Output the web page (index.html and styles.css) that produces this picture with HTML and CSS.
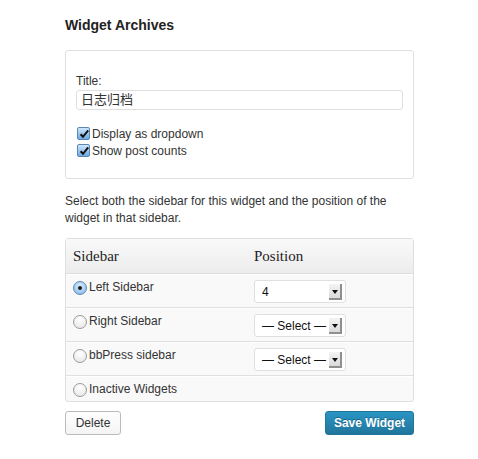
FILE: index.html
```html
<!DOCTYPE html>
<html>
<head>
<meta charset="utf-8">
<link rel="stylesheet" href="styles.css">
</head>
<body>
<div class="widget">
  <h3 class="widget-title">Widget Archives</h3>
  <div class="box">
    <div class="field-label">Title:</div>
    <div class="text-input">日志归档</div>
    <div class="checks">
      <div class="check-row"><span class="checkbox"><svg viewBox="0 0 12 12" width="12" height="12"><path d="M2.6 6.2 L5 8.8 L10.2 2.4" fill="none" stroke="#111" stroke-width="2"/></svg></span><span>Display as dropdown</span></div>
      <div class="check-row"><span class="checkbox"><svg viewBox="0 0 12 12" width="12" height="12"><path d="M2.6 6.2 L5 8.8 L10.2 2.4" fill="none" stroke="#111" stroke-width="2"/></svg></span><span>Show post counts</span></div>
    </div>
  </div>
  <p class="desc">Select both the sidebar for this widget and the position of the widget in that sidebar.</p>
  <table class="sidebars">
    <thead>
      <tr><th class="col-sidebar">Sidebar</th><th>Position</th></tr>
    </thead>
    <tbody>
      <tr>
        <td><div class="opt-wrap"><span class="radio checked"></span><span class="opt">Left Sidebar</span></div></td>
        <td><div class="select"><span class="select-text">4</span><span class="select-arrow"></span></div></td>
      </tr>
      <tr>
        <td><div class="opt-wrap"><span class="radio"></span><span class="opt">Right Sidebar</span></div></td>
        <td><div class="select"><span class="select-text">— Select —</span><span class="select-arrow"></span></div></td>
      </tr>
      <tr>
        <td><div class="opt-wrap"><span class="radio"></span><span class="opt">bbPress sidebar</span></div></td>
        <td><div class="select"><span class="select-text">— Select —</span><span class="select-arrow"></span></div></td>
      </tr>
      <tr class="last">
        <td><div class="opt-wrap"><span class="radio"></span><span class="opt">Inactive Widgets</span></div></td>
        <td></td>
      </tr>
    </tbody>
  </table>
  <div class="actions">
    <button class="btn btn-delete">Delete</button>
    <button class="btn btn-save">Save Widget</button>
  </div>
</div>
</body>
</html>
```
FILE: styles.css
```css
html, body {
  margin: 0;
  padding: 0;
  background: #fff;
}
body {
  font-family: "Liberation Sans", Arial, sans-serif;
  font-size: 12px;
  color: #333;
}
.widget {
  width: 349px;
  margin-left: 65px;
  padding-top: 15px;
}
.widget-title {
  margin: 0;
  font-size: 14px;
  line-height: 20px;
  font-weight: bold;
  color: #222;
}
.box {
  margin-top: 15px;
  border: 1px solid #dfdfdf;
  border-radius: 3px;
  padding: 22px 10px 19px 10px;
}
.field-label {
  line-height: 17px;
  font-size: 12px;
}
.text-input {
  height: 18px;
  border: 1px solid #dfdfdf;
  border-radius: 3px;
  padding: 0 4px;
  line-height: 18px;
  font-family: "Liberation Sans", "Noto Sans CJK SC", sans-serif;
  font-size: 13px;
  color: #333;
  background: #fff;
}
.checks {
  margin-top: 15px;
}
.check-row {
  display: flex;
  align-items: center;
  height: 17px;
  font-size: 12px;
}
.checkbox {
  display: inline-flex;
  width: 11px;
  height: 11px;
  margin: 0 2px 0 1px;
  border: 1px solid #5b86b0;
  border-radius: 2px;
  background: linear-gradient(#cfe6fb, #6ea9e2);
  align-items: center;
  justify-content: center;
  overflow: hidden;
}
.checkbox svg {
  flex: none;
}
.desc {
  margin: 14px 0 11px;
  line-height: 17px;
  font-size: 12px;
}
.sidebars {
  width: 349px;
  border-collapse: separate;
  border-spacing: 0;
  border: 1px solid #dfdfdf;
  border-radius: 3px;
  background: #f9f9f9;
}
.sidebars th {
  text-align: left;
  font-family: "Liberation Serif", "Times New Roman", serif;
  font-weight: normal;
  font-size: 15px;
  color: #222;
  height: 34px;
  padding: 0 7px;
  vertical-align: middle;
  background: linear-gradient(#f9f9f9, #ececec);
  border-bottom: 1px solid #dfdfdf;
}
.sidebars th.col-sidebar {
  width: 167px;
}
.sidebars td {
  padding: 6px 7px 4px;
  height: 23px;
  box-sizing: content-box;
  vertical-align: top;
  border-bottom: 1px solid #dfdfdf;
  box-shadow: inset 0 1px 0 #fff;
}
.sidebars tr.last td {
  height: 15px;
  border-bottom: 0;
}
.opt-wrap {
  display: flex;
  align-items: flex-start;
}
.radio {
  display: inline-block;
  box-sizing: border-box;
  width: 14px;
  height: 14px;
  border-radius: 50%;
  border: 1px solid #9a9a9a;
  background: radial-gradient(circle at 50% 30%, #ffffff, #e4e4e4);
  flex: none;
  margin-top: 1px;
  position: relative;
}
.radio.checked {
  border-color: #5b86b0;
  background: radial-gradient(circle at 50% 35%, #dcefff, #7bb3e8);
}
.radio.checked::after {
  content: "";
  position: absolute;
  left: 4px;
  top: 4px;
  width: 4px;
  height: 4px;
  border-radius: 50%;
  background: #1a1a1a;
}
.opt {
  margin-left: 2px;
  font-size: 12px;
  line-height: 14px;
}
.select {
  box-sizing: border-box;
  width: 92px;
  height: 23px;
  border: 1px solid #dfdfdf;
  border-radius: 3px;
  background: #fff;
  display: flex;
  align-items: center;
  justify-content: space-between;
  padding: 0 3px 0 7px;
  white-space: nowrap;
}
.select-text {
  font-size: 12px;
  color: #111;
  white-space: nowrap;
}
.select-arrow {
  box-sizing: border-box;
  width: 13px;
  height: 16px;
  flex: none;
  background: linear-gradient(#f4f4f4, #dadada);
  border-right: 2px solid #8f8f8f;
  border-bottom: 2px solid #8f8f8f;
  position: relative;
}
.select-arrow::after {
  content: "";
  position: absolute;
  left: 3px;
  top: 6px;
  border-left: 3px solid transparent;
  border-right: 3px solid transparent;
  border-top: 4px solid #111;
}
.actions {
  display: flex;
  justify-content: space-between;
  margin-top: 9px;
}
.btn {
  height: 24px;
  border-radius: 3px;
  font-family: "Liberation Sans", Arial, sans-serif;
  font-size: 12px;
  padding: 0;
  white-space: nowrap;
  cursor: pointer;
}
.btn-delete {
  width: 56px;
  border: 1px solid #bbb;
  color: #333;
  background: linear-gradient(#fefefe, #f4f4f4);
}
.btn-save {
  width: 89px;
  border: 1px solid #21759b;
  color: #fff;
  font-weight: bold;
  background: linear-gradient(#2a95c5, #21759b);
  text-shadow: 0 -1px 0 rgba(0,0,0,0.3);
}
```
